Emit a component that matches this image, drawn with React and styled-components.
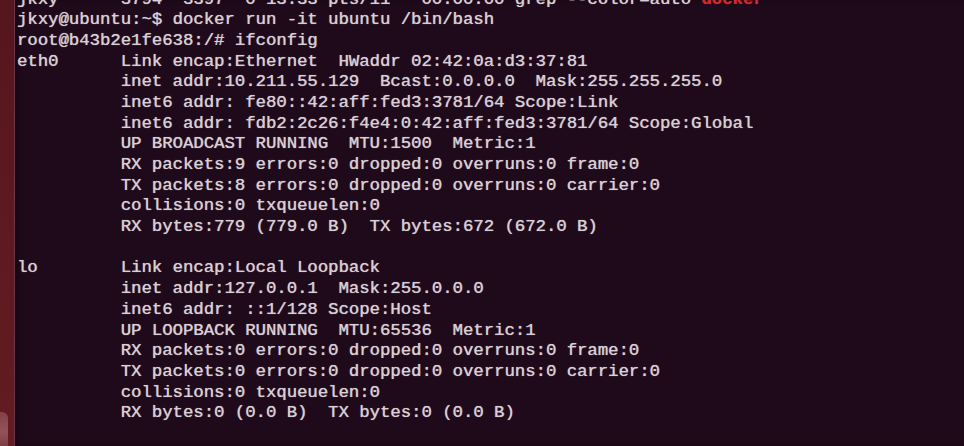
import styled, { createGlobalStyle } from 'styled-components';

const GlobalStyle = createGlobalStyle`
  html, body {
    margin: 0;
    padding: 0;
    background: #1f0a1b;
    overflow: hidden;
  }
`;

const Screen = styled.div`
  display: flex;
  flex-direction: row;
  width: 964px;
  height: 446px;
  overflow: hidden;
  background: #1f0a1b;
`;

const Launcher = styled.div`
  display: flex;
  flex-direction: column;
  justify-content: flex-end;
  width: 14px;
  flex-shrink: 0;
  background: linear-gradient(180deg, #56161d 0%, #5e1a20 60%, #621c22 100%);
  border-right: 1px solid #6e3448;
`;

/* the half-hidden launcher icon at the bottom */
const LauncherIcon = styled.div`
  width: 8px;
  height: 40px;
  margin-bottom: -6px;
  border-radius: 0 6px 6px 0;
  background: linear-gradient(180deg, #8c4a55 0%, #a06068 50%, #7a3a44 100%);
  opacity: 0.8;
`;

const Terminal = styled.div`
  flex: 1;
  padding-left: 2px;
  background: #1f0a1b;
  box-shadow: inset 3px 0 4px rgba(0, 0, 0, 0.35);
`;

const Output = styled.div`
  margin-top: -10.5px;
  font-family: 'Liberation Mono', 'DejaVu Sans Mono', monospace;
  font-size: 17.3px;
  line-height: 20.7px;
  color: #d9d0d7;
  white-space: pre;
  text-shadow: 0 0 1px rgba(220, 210, 218, 0.6), 0.4px 0 0 rgba(220, 210, 218, 0.5);
`;

const Line = styled.div`
  height: 20.7px;
`;

const Match = styled.span`
  color: #d42a2a;
  font-weight: bold;
  text-shadow: 0 0 1px rgba(212, 42, 42, 0.6);
`;

const lines = [
  'jkxy@ubuntu:~$ docker run -it ubuntu /bin/bash',
  'root@b43b2e1fe638:/# ifconfig',
  'eth0      Link encap:Ethernet  HWaddr 02:42:0a:d3:37:81  ',
  '          inet addr:10.211.55.129  Bcast:0.0.0.0  Mask:255.255.255.0',
  '          inet6 addr: fe80::42:aff:fed3:3781/64 Scope:Link',
  '          inet6 addr: fdb2:2c26:f4e4:0:42:aff:fed3:3781/64 Scope:Global',
  '          UP BROADCAST RUNNING  MTU:1500  Metric:1',
  '          RX packets:9 errors:0 dropped:0 overruns:0 frame:0',
  '          TX packets:8 errors:0 dropped:0 overruns:0 carrier:0',
  '          collisions:0 txqueuelen:0 ',
  '          RX bytes:779 (779.0 B)  TX bytes:672 (672.0 B)',
  '',
  'lo        Link encap:Local Loopback  ',
  '          inet addr:127.0.0.1  Mask:255.0.0.0',
  '          inet6 addr: ::1/128 Scope:Host',
  '          UP LOOPBACK RUNNING  MTU:65536  Metric:1',
  '          RX packets:0 errors:0 dropped:0 overruns:0 frame:0',
  '          TX packets:0 errors:0 dropped:0 overruns:0 carrier:0',
  '          collisions:0 txqueuelen:0 ',
  '          RX bytes:0 (0.0 B)  TX bytes:0 (0.0 B)',
  '',
];

export default function App() {
  return (
    <>
      <GlobalStyle />
      <Screen>
        <Launcher>
          <LauncherIcon />
        </Launcher>
        <Terminal>
          <Output>
            <Line>
              {'jkxy      3794  3397  0 13:33 pts/11   00:00:00 grep --color=auto '}
              <Match>docker</Match>
            </Line>
            {lines.map((l, i) => (
              <Line key={i}>{l}</Line>
            ))}
          </Output>
        </Terminal>
      </Screen>
    </>
  );
}
